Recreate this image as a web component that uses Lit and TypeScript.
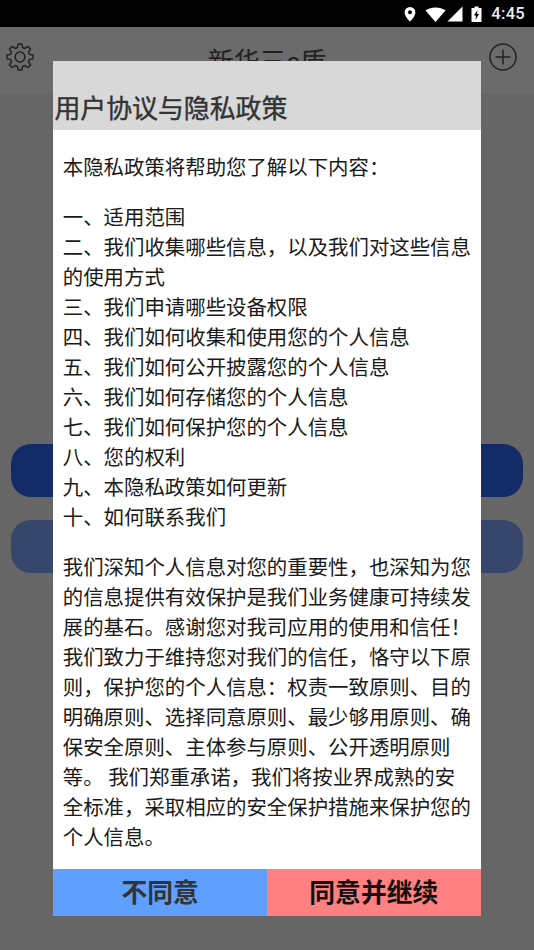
import { LitElement, html, css } from "lit";
import { customElement } from "lit/decorators.js";

const LIST = [
  "一、适用范围",
  "二、我们收集哪些信息，以及我们对这些信息的使用方式",
  "三、我们申请哪些设备权限",
  "四、我们如何收集和使用您的个人信息",
  "五、我们如何公开披露您的个人信息",
  "六、我们如何存储您的个人信息",
  "七、我们如何保护您的个人信息",
  "八、您的权利",
  "九、本隐私政策如何更新",
  "十、如何联系我们",
];

/* Eight-toothed gear outline, computed around the centre of a 28-unit box. */
function gearPath(): string {
  const c = 14;
  const outer = 13.2;
  const inner = 9.8;
  const pts: string[] = [];
  for (let i = 0; i < 8; i++) {
    const a = -Math.PI / 2 + (i * Math.PI) / 4;
    const at = (r: number, d: number) =>
      `${(c + r * Math.cos(a + d)).toFixed(2)} ${(c + r * Math.sin(a + d)).toFixed(2)}`;
    pts.push(at(inner, -0.27), at(outer, -0.14), at(outer, 0.14), at(inner, 0.27));
  }
  return `M${pts.join("L")}Z`;
}

@customElement("app-root")
export class AppRoot extends LitElement {
  static styles = css`
    :host {
      display: block;
      position: relative;
      width: 534px;
      height: 950px;
      overflow: hidden;
      background: #666;
      font-family: "Noto Sans CJK SC", "Noto Sans", sans-serif;
    }
    .status {
      height: 27px;
      background: #000;
      display: flex;
      align-items: center;
      justify-content: flex-end;
      padding-right: 9px;
      color: #eee;
      box-sizing: border-box;
    }
    .status svg { display: block; flex: none; }
    .wifi { margin-left: 8px; }
    .signal { margin-left: 1px; }
    .battery { margin-left: 8px; }
    .time {
      font-family: Roboto, sans-serif;
      font-size: 16.5px;
      font-weight: 500;
      letter-spacing: 0.3px;
      margin-left: 8px;
    }
    .bar {
      height: 67px;
      background: #6b6b6b;
      display: flex;
      align-items: flex-start;
      justify-content: space-between;
      padding: 16px 17px 0 6px;
      box-sizing: border-box;
      position: relative;
    }
    .bar svg { display: block; }
    .app-title {
      position: absolute;
      left: 0;
      right: 0;
      top: 16px;
      text-align: center;
      font-size: 26px;
      line-height: 34px;
      color: #222;
    }
    .actions {
      padding: 350px 11px 0;
      display: flex;
      flex-direction: column;
      gap: 23px;
    }
    .action { height: 53px; border-radius: 20px; background: #132c67; }
    .action.dim { background: #36476b; }
    .modal {
      position: absolute;
      left: 53.4px;
      top: 61px;
      width: 427.2px;
      height: 855px;
      background: #fff;
      display: flex;
      flex-direction: column;
    }
    .head {
      height: 69px;
      flex: none;
      background: #d8d8d8;
      display: flex;
      align-items: flex-end;
      padding: 0 0 3px 1px;
      box-sizing: border-box;
      font-size: 25.9px;
      line-height: 40px;
      font-weight: 400;
      -webkit-text-stroke: 0.4px #333;
      color: #333;
    }
    .body {
      flex: 1;
      min-height: 0;
      overflow: hidden;
      padding: 21px 9.4px 0;
      font-size: 20.42px;
      line-height: 30px;
      color: #1a1a1a;
    }
    .body p { margin: 0 0 20px; }
    .body .list div { margin: 0; }
    .btns { display: flex; height: 47px; flex: none; }
    .btn {
      flex: 1;
      display: flex;
      align-items: center;
      justify-content: center;
      font-size: 25.8px;
      line-height: 44px;
      padding-bottom: 3px;
      font-weight: 700;
      color: #333;
      background: #5fa0ff;
    }
    .btn.ok { background: #ff8080; color: #111; }
  `;

  render() {
    return html`
      <div class="status">
        <svg width="14" height="18" viewBox="0 0 14 18"><path fill="#fff" fill-rule="evenodd" d="M7 2a5.4 5.4 0 0 0-5.4 5.4C1.600 11.400 7 16.500 7 16.500s5.400-5.100 5.400-9.100A5.400 5.400 0 0 0 7 2zm0 7.300a2 2 0 1 1 0-4 2 2 0 0 1 0 4z"/></svg>
        <svg class="wifi" width="21" height="18" viewBox="0 0 21 18"><path fill="#fff" d="M0.500 5.500C3.200 3.700 6.600 2.500 10.500 2.500s7.300 1.200 10 3L10.500 17z"/></svg>
        <svg class="signal" width="16" height="16" viewBox="0 0 16 16"><path fill="#fff" d="M15.500 0.500V15.500H0.500z"/></svg>
        <svg class="battery" width="12" height="18" viewBox="0 0 12 18"><path fill="#fff" fill-rule="evenodd" d="M3.500 1.500h4V3H10.500V17H0.500V3H3.500zM6.500 5 3 10.500H5L4.500 15 8 9H6z"/></svg>
        <span class="time">4:45</span>
      </div>
      <div class="bar">
        <svg width="28" height="28" viewBox="0 0 28 28" fill="none" stroke="#222" stroke-width="1.500" stroke-linejoin="round">
          <path d=${gearPath()}/>
          <circle cx="14" cy="14" r="4.900"/>
        </svg>
        <div class="app-title">新华三e盾</div>
        <svg width="28" height="28" viewBox="0 0 28 28" fill="none" stroke="#222" stroke-width="1.500">
          <circle cx="14" cy="14" r="13"/>
          <path d="M14 6.500v15M6.500 14h15"/>
        </svg>
      </div>
      <div class="actions">
        <div class="action"></div>
        <div class="action dim"></div>
      </div>
      <div class="modal">
        <div class="head">用户协议与隐私政策</div>
        <div class="body">
          <p>本隐私政策将帮助您了解以下内容：</p>
          <p class="list">${LIST.map((t) => html`<div>${t}</div>`)}</p>
          <p>我们深知个人信息对您的重要性，也深知为您的信息提供有效保护是我们业务健康可持续发展的基石。感谢您对我司应用的使用和信任！我们致力于维持您对我们的信任，恪守以下原则，保护您的个人信息：权责一致原则、目的明确原则、选择同意原则、最少够用原则、确保安全原则、主体参与原则、公开透明原则等。 我们郑重承诺，我们将按业界成熟的安全标准，采取相应的安全保护措施来保护您的个人信息。</p>
        </div>
        <div class="btns">
          <div class="btn">不同意</div>
          <div class="btn ok">同意并继续</div>
        </div>
      </div>
    `;
  }
}
